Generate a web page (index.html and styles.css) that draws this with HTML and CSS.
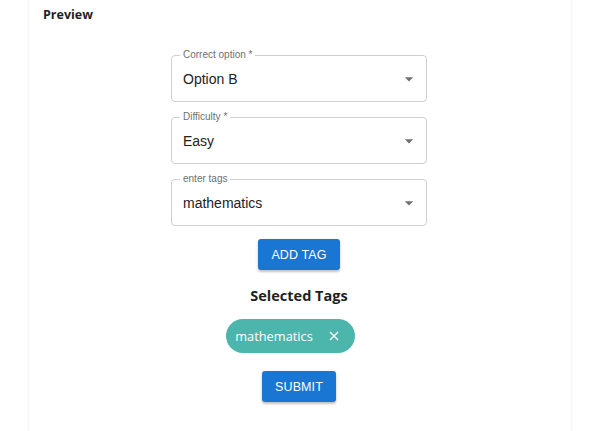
FILE: index.html
```html
<!DOCTYPE html>
<html>
<head>
<meta charset="utf-8">
<link rel="stylesheet" href="styles.css">
</head>
<body>
<div class="card">
  <div class="title">Preview</div>
  <div class="form">
    <div class="field">
      <span class="label">Correct option *</span>
      <span class="value">Option B</span>
      <svg class="arrow" viewBox="0 0 24 24" width="20" height="20"><path d="M7 10l5 5 5-5z"/></svg>
    </div>
    <div class="field">
      <span class="label">Difficulty *</span>
      <span class="value">Easy</span>
      <svg class="arrow" viewBox="0 0 24 24" width="20" height="20"><path d="M7 10l5 5 5-5z"/></svg>
    </div>
    <div class="field">
      <span class="label">enter tags</span>
      <span class="value">mathematics</span>
      <svg class="arrow" viewBox="0 0 24 24" width="20" height="20"><path d="M7 10l5 5 5-5z"/></svg>
    </div>
    <button class="btn add">ADD TAG</button>
    <div class="heading">Selected Tags</div>
    <div class="chip">
      <span class="chip-text">mathematics</span>
      <svg class="chip-x" viewBox="0 0 10 10" width="10" height="10"><path d="M1 1L9 9M9 1L1 9"/></svg>
    </div>
    <button class="btn submit">SUBMIT</button>
  </div>
</div>
</body>
</html>
```
FILE: styles.css
```css
html, body {
  margin: 0;
  padding: 0;
  background: #ffffff;
}
body {
  font-family: "Liberation Sans", Arial, sans-serif;
  color: #222;
  overflow: hidden;
}
.card {
  margin: -10px 31px 0 29px;
  padding: 17px 16px 40px 14px;
  background: #fff;
  box-shadow: 0 0 3px rgba(0, 0, 0, 0.10);
  min-height: 440px;
  box-sizing: border-box;
}
.title {
  font-family: "Open Sans", "Noto Sans", sans-serif;
  font-weight: 700;
  font-size: 12.5px;
  line-height: 16px;
  color: #1f1f1f;
}
.form {
  display: flex;
  flex-direction: column;
  align-items: center;
  margin-top: 32px;
}
.field {
  position: relative;
  width: 256px;
  height: 47px;
  box-sizing: border-box;
  border: 1px solid #cfcfcf;
  border-radius: 4px;
  display: flex;
  align-items: center;
  padding: 0 7px 0 11px;
  margin-bottom: 15px;
}
.field:last-of-type {
  margin-bottom: 0;
}
.label {
  position: absolute;
  left: 8px;
  top: -7px;
  padding: 0 3px;
  background: #fff;
  font-size: 10px;
  line-height: 12px;
  color: #707070;
}
.value {
  flex: 1;
  font-size: 14px;
  color: #222;
}
.arrow {
  fill: #707070;
}
.btn {
  border: none;
  border-radius: 3px;
  background: #1976d2;
  color: #fff;
  font-family: "Liberation Sans", Arial, sans-serif;
  font-size: 12.5px;
  letter-spacing: 0.1px;
  height: 31px;
  box-shadow: 0 2px 2px rgba(0, 0, 0, 0.18), 0 1px 4px rgba(0, 0, 0, 0.10);
  padding: 0;
}
.add {
  width: 82px;
  margin-top: -2px;
}
.heading {
  font-family: "Open Sans", "Noto Sans", sans-serif;
  font-weight: 700;
  font-size: 14.5px;
  line-height: 20px;
  color: #1f1f1f;
  margin-top: 16px;
}
.chip {
  display: flex;
  align-items: center;
  height: 34px;
  box-sizing: border-box;
  border-radius: 17px;
  background: #4db6ac;
  padding: 0 16px 0 9px;
  margin: 13px 17px 0 0;
  color: #fff;
}
.chip-text {
  font-family: "Open Sans", "Noto Sans", sans-serif;
  font-size: 12.8px;
}
.chip-x {
  margin-left: 16px;
  stroke: #fff;
  stroke-width: 1.4;
  fill: none;
}
.submit {
  width: 74px;
  margin-top: 18px;
}
```
